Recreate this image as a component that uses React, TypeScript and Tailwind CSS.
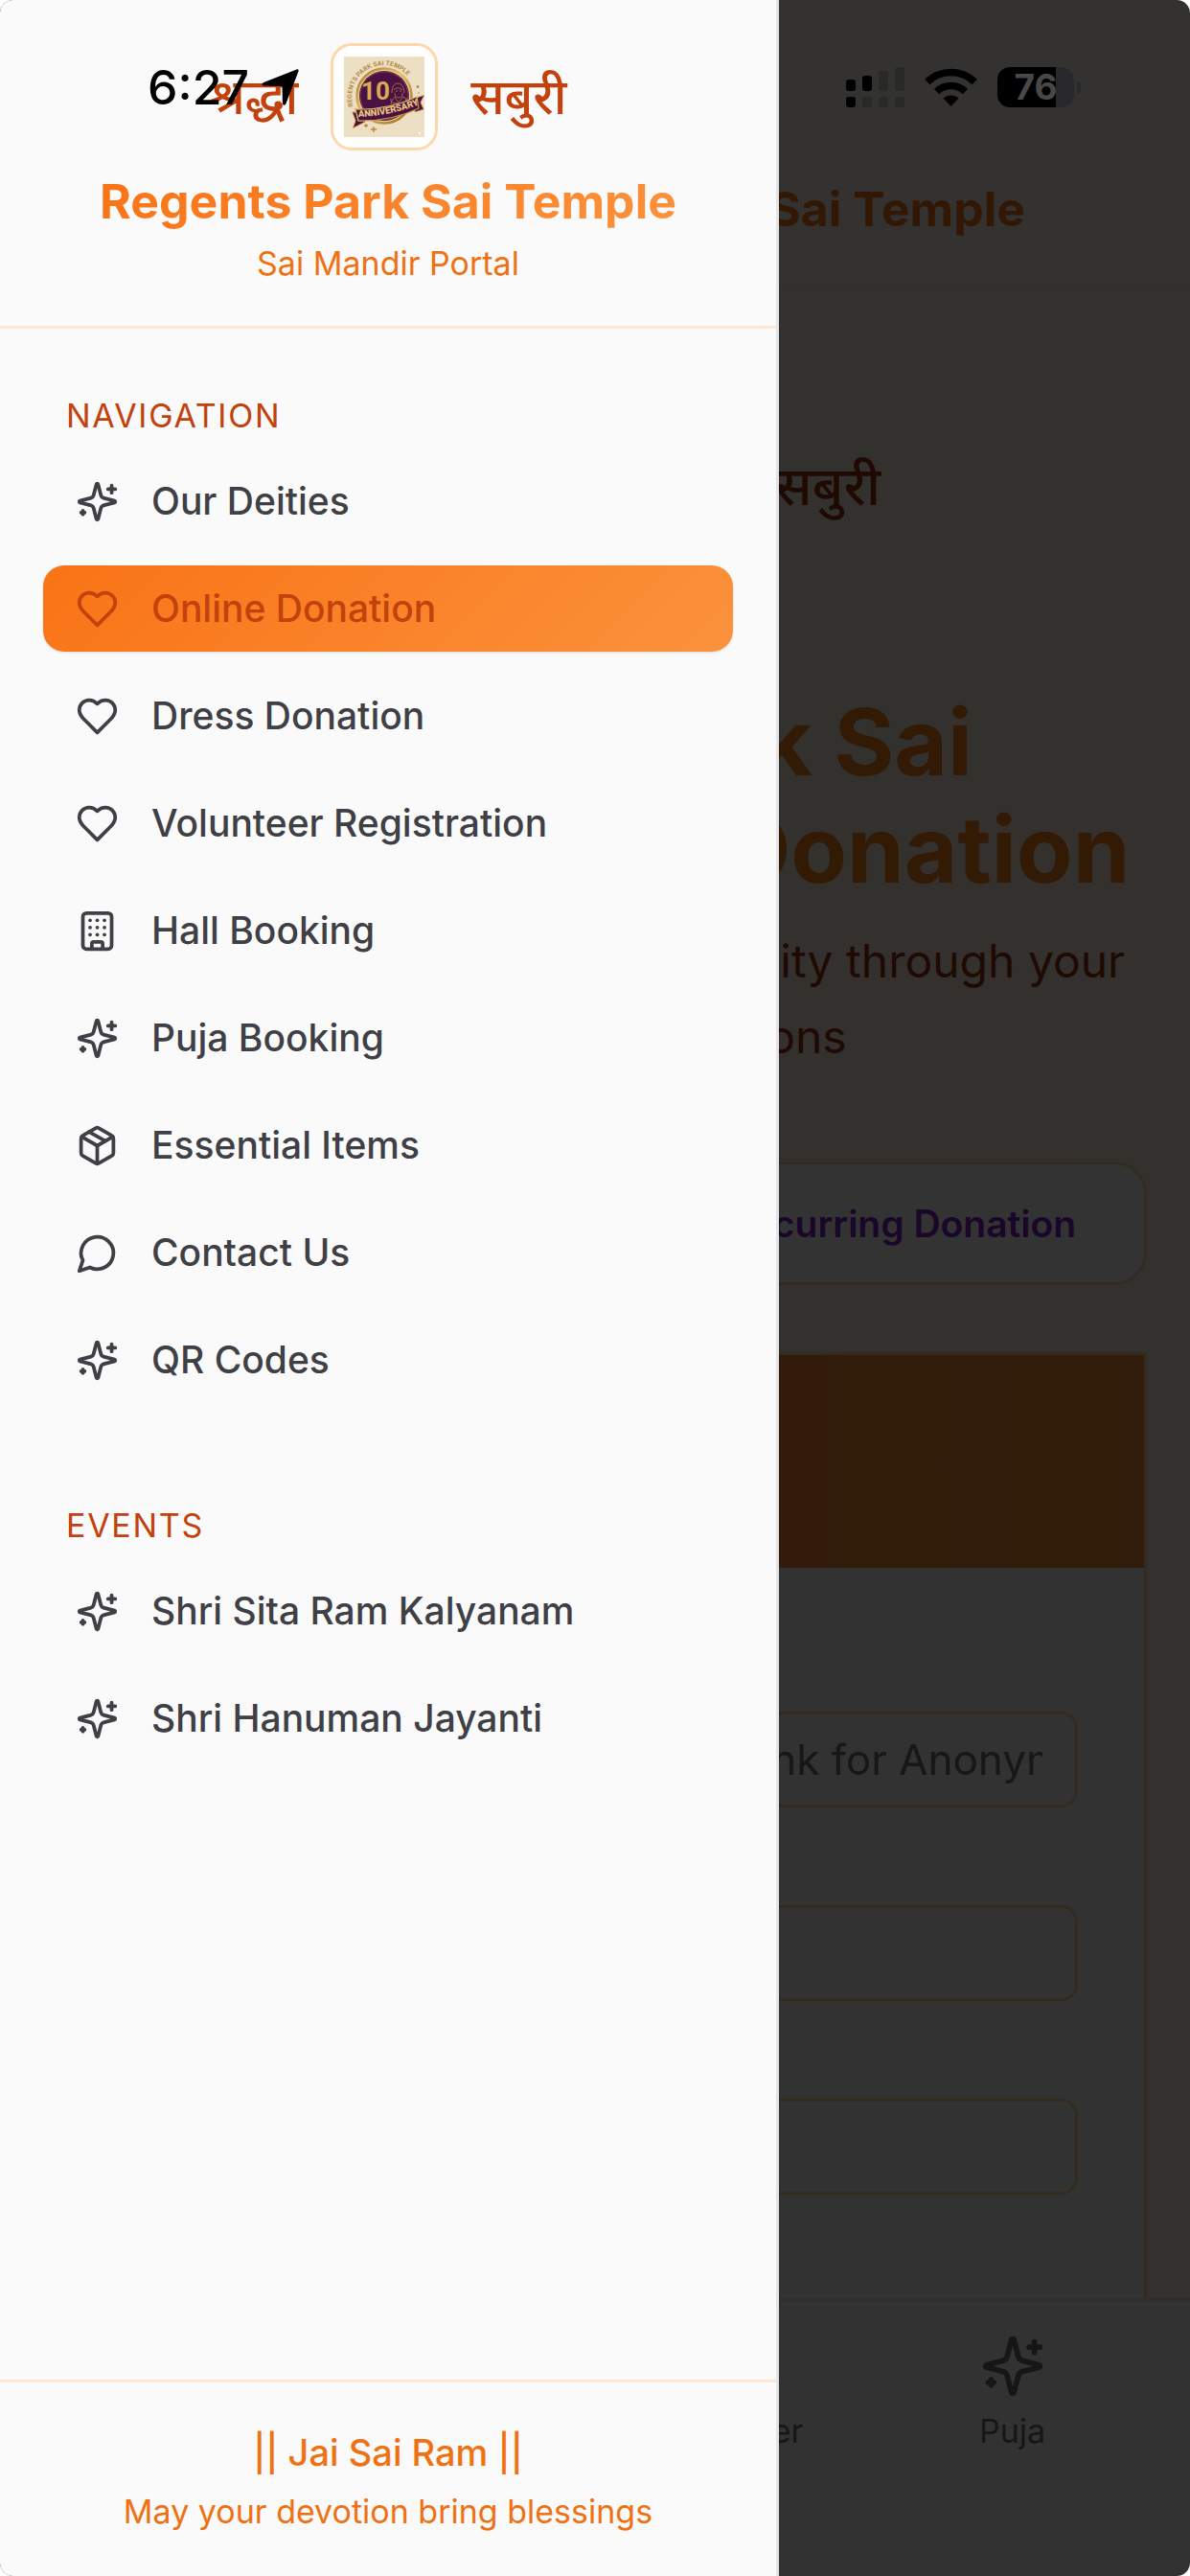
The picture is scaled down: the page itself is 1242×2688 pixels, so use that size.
import type { ComponentType, ReactNode } from "react";
import { Building, House, Package, RefreshCw } from "lucide-react";

type IconProps = { className?: string };

type MenuItem = {
  label: string;
  icon: ComponentType<IconProps>;
  active?: boolean;
};

function StrokeIcon({ className, children }: IconProps & { children: ReactNode }) {
  return (
    <svg
      viewBox="0 0 24 24"
      fill="none"
      stroke="currentColor"
      strokeWidth={2}
      strokeLinecap="round"
      strokeLinejoin="round"
      aria-hidden="true"
      className={className}
    >
      {children}
    </svg>
  );
}

function SparklesIcon({ className }: IconProps) {
  return (
    <StrokeIcon className={className}>
      <path d="M9.937 15.5A2 2 0 0 0 8.5 14.063l-6.135-1.582a.5.5 0 0 1 0-.962L8.5 9.936A2 2 0 0 0 9.937 8.5l1.582-6.135a.5.5 0 0 1 .963 0L14.063 8.5A2 2 0 0 0 15.5 9.937l6.135 1.581a.5.5 0 0 1 0 .964L15.5 14.063a2 2 0 0 0-1.437 1.437l-1.582 6.135a.5.5 0 0 1-.963 0z" />
      <path d="M20 3v4" />
      <path d="M22 5h-4" />
      <path d="M4 17v2" />
      <path d="M5 18H3" />
    </StrokeIcon>
  );
}

function HeartIcon({ className }: IconProps) {
  return (
    <StrokeIcon className={className}>
      <path d="M19 14c1.49-1.46 3-3.21 3-5.5A5.5 5.5 0 0 0 16.5 3c-1.76 0-3 .5-4.5 2-1.5-1.5-2.74-2-4.5-2A5.5 5.5 0 0 0 2 8.5c0 2.3 1.5 4.05 3 5.5l7 7Z" />
    </StrokeIcon>
  );
}

function MessageIcon({ className }: IconProps) {
  return (
    <StrokeIcon className={className}>
      <path d="M7.9 20A9 9 0 1 0 4 16.1L2 22Z" />
    </StrokeIcon>
  );
}

const navigation: MenuItem[] = [
  { label: "Our Deities", icon: SparklesIcon },
  { label: "Online Donation", icon: HeartIcon, active: true },
  { label: "Dress Donation", icon: HeartIcon },
  { label: "Volunteer Registration", icon: HeartIcon },
  { label: "Hall Booking", icon: Building },
  { label: "Puja Booking", icon: SparklesIcon },
  { label: "Essential Items", icon: Package },
  { label: "Contact Us", icon: MessageIcon },
  { label: "QR Codes", icon: SparklesIcon },
];

const events: MenuItem[] = [
  { label: "Shri Sita Ram Kalyanam", icon: SparklesIcon },
  { label: "Shri Hanuman Jayanti", icon: SparklesIcon },
];

const tabs: MenuItem[] = [
  { label: "Home", icon: House },
  { label: "Donate", icon: HeartIcon },
  { label: "Volunteer", icon: HeartIcon },
  { label: "Puja", icon: SparklesIcon },
];

function TempleLogo({ className }: IconProps) {
  return (
    <svg viewBox="0 0 84 84" role="img" aria-label="10th anniversary" className={className}>
      <defs>
        <linearGradient id="gold" x1="0" y1="0" x2="1" y2="1">
          <stop offset="0" stopColor="#a8741f" />
          <stop offset="0.45" stopColor="#e3c06c" />
          <stop offset="1" stopColor="#94621a" />
        </linearGradient>
        <path id="arc" d="M9.500 52A33 33 0 1 1 73.500 33" />
        <path id="ribbon" d="M15 63Q46 62 76 51" />
      </defs>
      <rect width="84" height="84" fill="#eddfc4" />
      <text fontFamily="Inter, sans-serif" fontSize="6.500" fontWeight="700" fill="#b08a45">
        <textPath href="#arc">REGENTS PARK SAI TEMPLE</textPath>
      </text>
      <circle cx="42" cy="41" r="29" fill="#e8cf94" />
      <circle cx="42" cy="41" r="28.500" fill="none" stroke="url(#gold)" strokeWidth="2.500" />
      <circle cx="42" cy="41" r="26" fill="#4b1143" />
      <circle cx="42" cy="41" r="25" fill="none" stroke="#7c3f4a" strokeWidth="1" />
      <text x="18" y="45" fontFamily="Roboto, sans-serif" fontSize="26" fontWeight="700" fill="#d6ac58">
        10
      </text>
      <g fill="none" stroke="#a9784a" strokeWidth="0.900">
        <path d="M50 38c0-6 2-10 6-10s7 4 7 10M52 35c2-3 7-3 9 0M53 38c1 6 2 9 4 9s4-4 4-9M54 36h2M58 36h2M55 42q2 2 4 0" />
        <path d="M49 50c1-5 3-7 5-8M66 49c0-4-2-6-5-7M49 44c-1 4 3 5 8 5s9-2 8-6" />
      </g>
      <path d="M9 58l10 1 3 9-13 7 3-8z" fill="#4b1143" stroke="url(#gold)" strokeWidth="1" />
      <path d="M73 44l11-4-4 8 3 7-9 3z" fill="#4b1143" stroke="url(#gold)" strokeWidth="1" />
      <path d="M12 55Q46 56 76 42l2 12Q48 68 15 67z" fill="#4b1143" stroke="url(#gold)" strokeWidth="1.300" />
      <text fontFamily="Roboto, sans-serif" fontSize="9.500" fontWeight="900" fill="#e6c781">
        <textPath href="#ribbon">ANNIVERSARY</textPath>
      </text>
      <path d="M31 73v6M28 76h6M23 70v4M21 72h4M77 30v3M75.500 31.500h3" stroke="#b58b3c" strokeWidth="1.400" />
      <circle cx="78" cy="38" r="0.800" fill="#b58b3c" />
      <circle cx="79" cy="80" r="1.200" fill="#fff" />
    </svg>
  );
}

function StatusBar() {
  return (
    <div className="pointer-events-none absolute inset-x-0 top-0 z-30 flex h-[182px] items-center justify-between pr-[114px] pl-[154px] text-black">
      <div className="flex items-center gap-[12px]">
        <span className="text-[50px] leading-[60px] font-medium">6:27</span>
        <svg viewBox="0 0 40 40" aria-hidden="true" className="size-[40px]">
          <path d="M37.500 1.500c1.500-.6 2.600.5 2 2L26.500 37c-1 2.500-3.500 2.300-3.600-.5L22.500 19 4 18.500c-3 0-3.300-2.400-.8-3.500z" fill="currentColor" />
        </svg>
      </div>
      <div className="flex items-center gap-[21px]">
        <svg viewBox="0 0 61 42" aria-hidden="true" className="h-[42px] w-[61px]">
          <rect x="0" y="13" width="10" height="12" rx="3" />
          <rect x="17" y="9" width="10" height="16" rx="3" />
          <rect x="34" y="4" width="10" height="21" rx="3" fill="#292928" />
          <rect x="51" y="0" width="10" height="25" rx="3" fill="#292928" />
          <rect x="0" y="31" width="10" height="11" rx="3" />
          <rect x="17" y="31" width="10" height="11" rx="3" fill="#292928" />
          <rect x="34" y="31" width="10" height="11" rx="3" fill="#292928" />
          <rect x="51" y="31" width="10" height="11" rx="3" fill="#292928" />
        </svg>
        <svg viewBox="0 0 55 40" aria-hidden="true" className="h-[40px] w-[55px]">
          <path d="M27.500 40l8-8.500c-4.500-4-11.500-4-16 0z" />
          <path d="M12.500 24.500c8.500-8 21.500-8 30 0" fill="none" stroke="#000" strokeWidth="7.500" />
          <path d="M2.700 14.500c14-13.500 35.600-13.500 49.600 0" fill="none" stroke="#000" strokeWidth="7.500" />
        </svg>
        <div className="flex items-center gap-[3px]">
          <div className="flex h-[42px] w-[80px] items-center justify-center rounded-[13px] bg-linear-to-r from-black from-76% to-[#29292b] to-76% text-[37px] leading-[42px] font-bold text-[#484848]">
            76
          </div>
          <div className="h-[13px] w-[4px] rounded-r-full bg-[#29292b]" />
        </div>
      </div>
    </div>
  );
}

function DonationPage() {
  return (
    <div className="flex h-full flex-col bg-[#fff6ea]">
      <header className="flex h-[300px] shrink-0 items-center justify-end border-b-3 border-[#fdebd8] bg-[#fffaf5] pt-[138px] pr-[172px]">
        <span className="text-[50px] leading-[62px] font-bold text-[#f97316]">Regents Park Sai Temple</span>
      </header>

      <main className="flex flex-1 flex-col overflow-hidden bg-linear-[135deg] from-[#fff7ed] via-[#fff1e4] to-[#faf3e4] px-[45px] pt-[117px]">
        <div className="flex items-center justify-center gap-[102px] text-[56px] leading-[80px] font-medium text-[#9a3412]">
          <span>श्रद्धा</span>
          <TempleLogo className="size-[180px]" />
          <span>सबुरी</span>
        </div>
        <h1 className="mt-[121px] text-center text-[96px] leading-[112px] font-bold text-[#f98017]">
          Regents Park Sai
          <br />
          Temple Online Donation
        </h1>
        <p className="mt-[21px] text-center text-[48px] leading-[79px] text-[#9a3412]">
          Support our temple and community through your
          <br />
          generous contributions
        </p>

        <div className="mt-[91px] grid h-[129px] shrink-0 grid-cols-2 items-center rounded-[34px] border-3 border-[#fed7aa] bg-[#fcfcfc] text-[39px] leading-[56px] font-semibold">
          <button type="button" className="flex items-center justify-center gap-[22px] text-[#ea580c]">
            <HeartIcon className="size-[45px]" />
            Single Donation
          </button>
          <button type="button" className="flex items-center justify-center gap-[22px] text-[#7e22ce]">
            <RefreshCw className="size-[45px]" />
            Recurring Donation
          </button>
        </div>

        <section className="mt-[70px] flex-1 border-3 border-b-0 border-[#fed7aa] bg-[#fdf9fa]">
          <div className="h-[222px] bg-linear-to-r from-[#f97316] to-[#fb923c]" />
          <form className="flex flex-col gap-[34px] px-[69px] pt-[82px] text-[44px] leading-[56px] text-[#7c2d12]">
            <label className="flex flex-col gap-[12px]">
              Name
              <input
                type="text"
                placeholder="Enter Donor Name or Leave Blank for Anonymous"
                className="h-[100px] rounded-[17px] border-3 border-[#fdd0a0] bg-[#fafafa] px-[34px] placeholder:text-[#737373]"
              />
            </label>
            <label className="flex flex-col gap-[12px]">
              Email
              <input type="email" className="h-[100px] rounded-[17px] border-3 border-[#fdd0a0] bg-[#fafafa] px-[34px]" />
            </label>
            <label className="flex flex-col gap-[12px]">
              Phone
              <input type="tel" className="h-[100px] rounded-[17px] border-3 border-[#fdd0a0] bg-[#fafafa] px-[34px]" />
            </label>
          </form>
        </section>
      </main>

      <nav className="grid h-[290px] shrink-0 grid-cols-4 border-t-3 border-[#ffe0cc] bg-[#fafafa] pt-[34px] pr-[38px] pl-[24px] text-[34px] leading-[45px] text-[#71717a]">
        {tabs.map(({ label, icon: Icon }) => (
          <a key={label} href="#" className="flex flex-col items-center gap-[11px]">
            <Icon className="size-[68px]" />
            {label}
          </a>
        ))}
      </nav>
    </div>
  );
}

function MenuGroup({ title, items }: { title: string; items: MenuItem[] }) {
  return (
    <section>
      <h2 className="flex h-[90px] items-center px-[24px] text-[34px] leading-[45px] tracking-wider text-[#c2410c] uppercase">
        {title}
      </h2>
      <ul className="flex flex-col gap-[22px]">
        {items.map(({ label, icon: Icon, active }) => (
          <li key={label}>
            <a
              href="#"
              className={
                active
                  ? "flex h-[90px] items-center gap-[34px] rounded-[22px] bg-linear-[135deg] from-[#f97316] to-[#fb923c] px-[34px] text-[#c2410c] shadow-sm"
                  : "flex h-[90px] items-center gap-[34px] rounded-[22px] px-[34px] text-[#3f3f46]"
              }
            >
              <Icon className="size-[45px]" />
              <span className="text-[39px] leading-[56px] font-medium">{label}</span>
            </a>
          </li>
        ))}
      </ul>
    </section>
  );
}

function Drawer() {
  return (
    <aside className="absolute inset-y-0 left-0 z-20 flex w-[813px] flex-col border-r-3 border-[#e4e4e7] bg-[#fafafa]">
      <header className="flex flex-col items-center border-b-3 border-[#fde6d2] pt-[45px] pb-[43px]">
        <div className="flex items-center gap-[34px] text-[51px] leading-[70px] font-medium text-[#c2410c]">
          <span>श्रद्धा</span>
          <div className="flex size-[112px] items-center justify-center rounded-[22px] border-3 border-[#fed7aa] bg-white">
            <TempleLogo className="size-[84px]" />
          </div>
          <span>सबुरी</span>
        </div>
        <h1 className="mt-[22px] bg-linear-[135deg] from-[#f97316] to-[#fb923c] bg-clip-text text-[50px] leading-[62px] font-bold text-transparent">
          Regents Park Sai Temple
        </h1>
        <p className="mt-[11px] text-[34px] leading-[45px] text-[#f07114]">Sai Mandir Portal</p>
      </header>

      <nav className="flex flex-1 flex-col gap-[82px] px-[45px] pt-[45px]">
        <MenuGroup title="Navigation" items={navigation} />
        <MenuGroup title="Events" items={events} />
      </nav>

      <footer className="border-t-3 border-[#fde6d2] py-[45px] text-center text-[#f07114]">
        <p className="text-[38px] leading-[56px] font-medium">|| Jai Sai Ram ||</p>
        <p className="mt-[11px] text-[34px] leading-[45px]">May your devotion bring blessings</p>
      </footer>
    </aside>
  );
}

export default function App() {
  return (
    <div className="relative h-screen overflow-hidden rounded-[14px] font-['Inter','Noto_Sans',sans-serif]">
      <DonationPage />
      <div className="absolute inset-0 z-10 bg-black/80" />
      <Drawer />
      <StatusBar />
    </div>
  );
}
